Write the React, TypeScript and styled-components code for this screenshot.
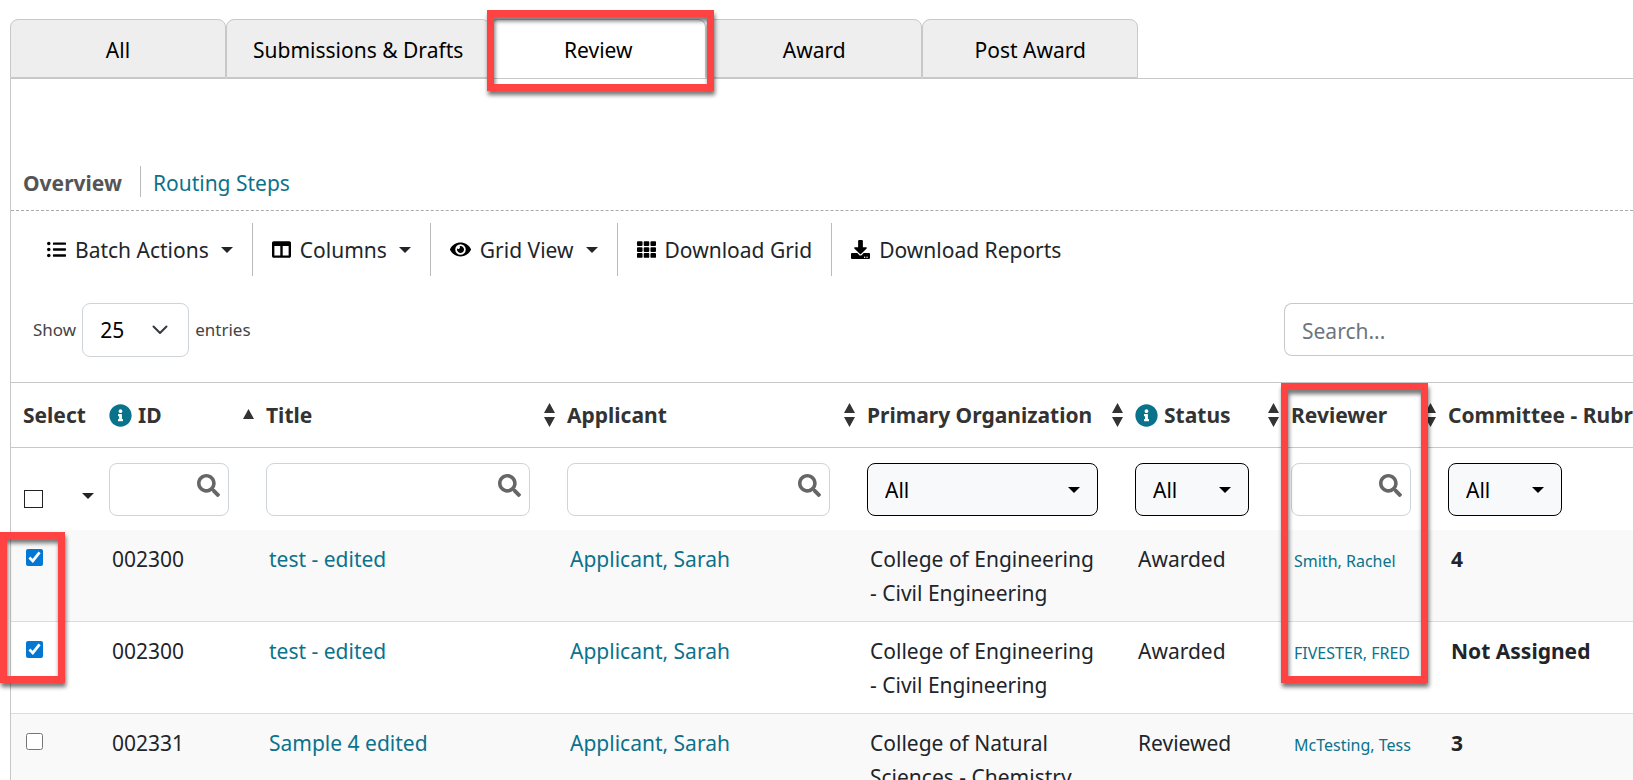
import React from "react";
import styled, { createGlobalStyle, css } from "styled-components";
import {
  FaColumns,
  FaDownload,
  FaEye,
  FaInfoCircle,
  FaListUl,
  FaSearch,
  FaTh,
} from "react-icons/fa";

const GlobalStyle = createGlobalStyle`
  *, *::before, *::after { box-sizing: border-box; }
  body {
    margin: 0;
    background: #fff;
    color: #212529;
    font-family: "Noto Sans", "Open Sans", sans-serif;
    font-size: 21px;
    line-height: 34px;
    overflow: hidden;
  }
  button, input, select { font: inherit; color: inherit; }
  a { color: #0b728c; text-decoration: none; }
`;

const Page = styled.main`
  padding: 19px 0 0 10px;
`;

const Tabs = styled.nav`
  display: flex;
`;

const Tab = styled.a<{ $active?: boolean }>`
  position: relative;
  display: flex;
  align-items: center;
  justify-content: center;
  min-width: 216px;
  height: 59px;
  padding: 3px 26px 0;
  border: 1px solid #c8c8c8;
  border-radius: 8px 8px 0 0;
  background: #eee;
  color: #000;
  ${(p) => p.$active && css`
    background: #fff;
    border-bottom-color: #fff;
  `}
`;

const Highlight = styled.span<{ $top: number; $left: number; $width: number; $height: number }>`
  position: absolute;
  z-index: 2;
  top: ${(p) => p.$top}px;
  left: ${(p) => p.$left}px;
  width: ${(p) => p.$width}px;
  height: ${(p) => p.$height}px;
  border: 7px solid #ff4343;
  filter: drop-shadow(1px 4px 2px rgba(0, 0, 0, 0.55));
  pointer-events: none;
`;

const Panel = styled.section`
  border-top: 1px solid #c8c8c8;
  border-left: 1px solid #c8c8c8;
`;

const SubNav = styled.nav`
  display: flex;
  align-items: center;
  margin-top: 80px;
  padding: 7px 12px 13px;
  border-bottom: 1px dashed #aaa;
`;

const SubLink = styled.a<{ $current?: boolean }>`
  height: 31px;
  line-height: 34px;
  padding-left: 12px;
  ${(p) => p.$current && css`
    padding: 0 18px 0 0;
    border-right: 1px solid #bbb;
    color: #555;
    font-weight: 700;
  `}
`;

const Toolbar = styled.div`
  display: flex;
  padding: 12px 17px 0;
`;

const ToolButton = styled.button`
  display: flex;
  align-items: center;
  gap: 9px;
  height: 53px;
  padding: 0 19px;
  border: 0;
  background: none;
  white-space: nowrap;
  & + & { border-left: 1px solid #bbb; }
  > svg:first-child { color: #000; }
`;

const CaretIcon = styled.svg`
  flex: none;
  width: 12px;
  height: 6px;
  fill: currentColor;
`;

const ToolCaret = styled(CaretIcon)`
  margin-left: 3px;
`;

const Controls = styled.div`
  display: flex;
  align-items: flex-start;
  justify-content: space-between;
  padding: 27px 0 25px 22px;
`;

const Length = styled.label`
  display: flex;
  align-items: center;
  gap: 6px;
  color: #444;
  font-size: 17px;
`;

const SelectWrap = styled.span`
  position: relative;
  display: block;
  > svg {
    position: absolute;
    pointer-events: none;
  }
`;

const LengthWrap = styled(SelectWrap)`
  > svg { right: 21px; top: 22px; }
`;

const LengthSelect = styled.select`
  appearance: none;
  display: block;
  width: 107px;
  height: 54px;
  padding: 0 17px;
  border: 1px solid #ced4da;
  border-radius: 8px;
  background: #fff;
  color: #000;
  font-size: 21px;
`;

const SearchInput = styled.input`
  width: 349px;
  height: 53px;
  padding: 2px 17px 0;
  border: 1px solid #c8c8c8;
  border-right: 0;
  border-radius: 8px 0 0 8px;
  outline: 0;
  &::placeholder { color: #6c757d; opacity: 1; }
`;

const Grid = styled.table`
  width: 100%;
  table-layout: fixed;
  border-collapse: separate;
  border-spacing: 0;
`;

const Col = styled.col<{ $w?: number }>`
  width: ${(p) => (p.$w ? `${p.$w}px` : "auto")};
`;

const HeadCell = styled.th`
  position: relative;
  height: 66px;
  padding: 0 0 0 12px;
  border-top: 1px solid #c8c8c8;
  border-bottom: 1px solid #c8c8c8;
  color: #333;
  font-weight: 700;
  text-align: left;
  white-space: nowrap;
`;

const HeadContent = styled.div`
  display: flex;
  align-items: center;
  gap: 6px;
`;

const InfoIcon = styled(FaInfoCircle)`
  flex: none;
  color: #0b728c;
`;

const SortIcon = styled.svg`
  flex: none;
  width: 11px;
  height: 24px;
  margin-left: auto;
  fill: #333;
`;

const FilterCell = styled.td`
  height: 82px;
  padding: 0 25px 0 12px;
  vertical-align: middle;
`;

const SelectAll = styled.div`
  display: flex;
  align-items: center;
  justify-content: space-between;
  width: 71px;
  padding: 20px 0 0 1px;
`;

const SelectAllBox = styled.input`
  appearance: none;
  width: 19px;
  height: 18px;
  margin: 0;
  border: 1px solid #222;
  &:checked { background: #0078d4; }
`;

const CaretButton = styled.button`
  display: flex;
  padding: 0 0 6px;
  border: 0;
  background: none;
`;

const FilterField = styled.div`
  position: relative;
  > svg {
    position: absolute;
    top: 11px;
    right: 9px;
    color: #666;
    pointer-events: none;
  }
`;

const FilterInput = styled.input`
  display: block;
  width: 100%;
  height: 53px;
  padding: 0 40px 0 12px;
  border: 1px solid #ced4da;
  border-radius: 8px;
  background: #fff;
`;

const FilterSelectWrap = styled(SelectWrap)<{ $compact?: boolean }>`
  width: ${(p) => (p.$compact ? "114px" : "100%")};
  > svg { right: 18px; top: 24px; color: #000; }
`;

const FilterSelect = styled.select`
  appearance: none;
  display: block;
  width: 100%;
  height: 53px;
  padding: 2px 17px 0;
  border: 1px solid #000;
  border-radius: 8px;
  background: #f8f9fb;
  color: #000;
`;

const Row = styled.tr<{ $shaded: boolean }>`
  background: ${(p) => (p.$shaded ? "#f9f9f9" : "#fff")};
`;

const Cell = styled.td`
  position: relative;
  padding: 12px 20px 11px 15px;
  border-bottom: 1px solid #ddd;
  vertical-align: top;
`;

const OrgCell = styled(Cell)`
  padding-right: 24px;
`;

const ReviewerCell = styled(Cell)`
  padding-right: 0;
  font-size: 16px;
  white-space: nowrap;
  > a { display: block; padding-top: 2px; }
`;

const RowCheck = styled.input`
  display: block;
  width: 17px;
  height: 17px;
  margin: 7px 0 0;
  accent-color: #0078d4;
`;

const Caret = () => (
  <CaretIcon viewBox="0 0 12 6" aria-hidden="true"><path d="M0 0h12L6 6z" /></CaretIcon>
);

const Chevron = () => (
  <svg width="16" height="10" viewBox="0 0 16 10" fill="none" stroke="#343a40" strokeWidth="2" strokeLinecap="round" strokeLinejoin="round" aria-hidden="true">
    <path d="M1.5 1.5 8 8l6.500-6.500" />
  </svg>
);

const Sort = ({ mode }: { mode: "asc" | "both" }) => (
  <SortIcon viewBox="0 0 11 24" aria-hidden="true">
    {mode === "both" ? <path d="M5.500 0 11 10H0zM0 14h11L5.500 24z" /> : <path d="M5.500 6 11 16H0z" />}
  </SortIcon>
);

type Column = {
  label: string;
  width?: number;
  info?: boolean;
  sort?: "asc" | "both";
  filter: "all" | "text" | "select" | "compact";
};

const columns: Column[] = [
  { label: "Select", width: 86, filter: "all" },
  { label: "ID", width: 157, info: true, sort: "asc", filter: "text" },
  { label: "Title", width: 301, sort: "both", filter: "text" },
  { label: "Applicant", width: 300, sort: "both", filter: "text" },
  { label: "Primary Organization", width: 268, sort: "both", filter: "select" },
  { label: "Status", width: 156, info: true, sort: "both", filter: "compact" },
  { label: "Reviewer", width: 157, sort: "both", filter: "text" },
  { label: "Committee - Rubric", filter: "compact" },
];

const rows = [
  { checked: true, id: "002300", title: "test - edited", applicant: "Applicant, Sarah", org: "College of Engineering - Civil Engineering", status: "Awarded", reviewer: "Smith, Rachel", rubric: "4" },
  { checked: true, id: "002300", title: "test - edited", applicant: "Applicant, Sarah", org: "College of Engineering - Civil Engineering", status: "Awarded", reviewer: "FIVESTER, FRED", rubric: "Not Assigned" },
  { checked: false, id: "002331", title: "Sample 4 edited", applicant: "Applicant, Sarah", org: "College of Natural Sciences - Chemistry", status: "Reviewed", reviewer: "McTesting, Tess", rubric: "3" },
];

const tools = [
  { label: "Batch Actions", Icon: FaListUl, size: 19, menu: true },
  { label: "Columns", Icon: FaColumns, size: 19, menu: true },
  { label: "Grid View", Icon: FaEye, size: 21, menu: true },
  { label: "Download Grid", Icon: FaTh, size: 19, menu: false },
  { label: "Download Reports", Icon: FaDownload, size: 19, menu: false },
];

function Filter({ column }: { column: Column }) {
  if (column.filter === "all") {
    return (
      <SelectAll>
        <SelectAllBox type="checkbox" aria-label="Select all rows" />
        <CaretButton aria-label="Selection options"><Caret /></CaretButton>
      </SelectAll>
    );
  }
  if (column.filter === "text") {
    return (
      <FilterField>
        <FilterInput type="text" aria-label={`Filter by ${column.label}`} />
        <FaSearch size={23} />
      </FilterField>
    );
  }
  return (
    <FilterSelectWrap $compact={column.filter === "compact"}>
      <FilterSelect aria-label={`Filter by ${column.label}`}><option>All</option></FilterSelect>
      <Caret />
    </FilterSelectWrap>
  );
}

export default function App() {
  return (
    <>
      <GlobalStyle />
      <Page>
        <Tabs>
          <Tab href="#all">All</Tab>
          <Tab href="#submissions">Submissions &amp; Drafts</Tab>
          <Tab href="#review" $active>
            Review
            <Highlight $top={-10} $left={-4} $width={227} $height={81} />
          </Tab>
          <Tab href="#award">Award</Tab>
          <Tab href="#post-award">Post Award</Tab>
        </Tabs>
        <Panel>
          <SubNav>
            <SubLink href="#overview" $current>Overview</SubLink>
            <SubLink href="#routing">Routing Steps</SubLink>
          </SubNav>
          <Toolbar>
            {tools.map(({ label, Icon, size, menu }) => (
              <ToolButton key={label}>
                <Icon size={size} />
                {label}
                {menu && <ToolCaret viewBox="0 0 12 6" aria-hidden="true"><path d="M0 0h12L6 6z" /></ToolCaret>}
              </ToolButton>
            ))}
          </Toolbar>
          <Controls>
            <Length>
              Show
              <LengthWrap>
                <LengthSelect><option>25</option></LengthSelect>
                <Chevron />
              </LengthWrap>
              entries
            </Length>
            <SearchInput type="text" placeholder="Search..." aria-label="Search" />
          </Controls>
          <Grid>
            <colgroup>
              {columns.map((c) => <Col key={c.label} $w={c.width} />)}
            </colgroup>
            <thead>
              <tr>
                {columns.map((c) => (
                  <HeadCell key={c.label} scope="col">
                    <HeadContent>
                      {c.info && <InfoIcon size={23} />}
                      {c.label}
                      {c.sort && <Sort mode={c.sort} />}
                    </HeadContent>
                    {c.label === "Reviewer" && <Highlight $top={0} $left={2} $width={147} $height={300} />}
                  </HeadCell>
                ))}
              </tr>
              <tr>
                {columns.map((c) => <FilterCell key={c.label}><Filter column={c} /></FilterCell>)}
              </tr>
            </thead>
            <tbody>
              {rows.map((r, i) => (
                <Row key={i} $shaded={i % 2 === 0}>
                  <Cell>
                    <RowCheck type="checkbox" defaultChecked={r.checked} aria-label={`Select ${r.id}, ${r.reviewer}`} />
                    {i === 0 && <Highlight $top={2} $left={-11} $width={65} $height={151} />}
                  </Cell>
                  <Cell>{r.id}</Cell>
                  <Cell><a href="#title">{r.title}</a></Cell>
                  <Cell><a href="#applicant">{r.applicant}</a></Cell>
                  <OrgCell>{r.org}</OrgCell>
                  <Cell>{r.status}</Cell>
                  <ReviewerCell><a href="#reviewer">{r.reviewer}</a></ReviewerCell>
                  <Cell><strong>{r.rubric}</strong></Cell>
                </Row>
              ))}
            </tbody>
          </Grid>
        </Panel>
      </Page>
    </>
  );
}
